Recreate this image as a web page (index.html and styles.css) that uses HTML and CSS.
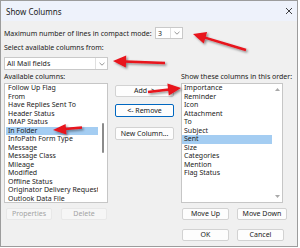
FILE: index.html
```html
<!DOCTYPE html>
<html lang="en">
<head>
    <meta charset="UTF-8">
    <meta name="viewport" content="width=device-width, initial-scale=1.0">
    <title>Show Columns</title>
    <link rel="stylesheet" href="styles.css">
</head>
<body>
    <div class="window">
        <div class="titlebar">
            <span class="title">Show Columns</span>
            <svg class="close" width="8" height="8" viewBox="0 0 8 8">
                <path d="M1 1 L7 7 M7 1 L1 7" stroke="#2b2b2b" stroke-width="0.9" fill="none"/>
            </svg>
        </div>
        <div class="content">
            <div class="max-row">
                <span class="max-label">Maximum number of lines in compact mode:</span>
                <div class="select select-small">
                    <span class="select-text">3</span>
                    <span class="select-drop">
                        <svg width="6" height="4" viewBox="0 0 6 4"><path d="M0.5 0.8 L3 3.2 L5.5 0.8" stroke="#6a6a6a" stroke-width="0.7" fill="none"/></svg>
                    </span>
                </div>
            </div>
            <div class="caption top-caption">Select available columns from:</div>
            <div class="select select-wide">
                <span class="select-text">All Mail fields</span>
                <span class="select-drop">
                    <svg width="6" height="4" viewBox="0 0 6 4"><path d="M0.5 0.8 L3 3.2 L5.5 0.8" stroke="#6a6a6a" stroke-width="0.7" fill="none"/></svg>
                </span>
            </div>
            <div class="columns">
                <div class="col-left">
                    <div class="caption">Available columns:</div>
                    <div class="listbox list-left">
                        <div class="items">
                            <div class="item">Follow Up Flag</div>
                            <div class="item">From</div>
                            <div class="item">Have Replies Sent To</div>
                            <div class="item">Header Status</div>
                            <div class="item">IMAP Status</div>
                            <div class="item selected">In Folder</div>
                            <div class="item">InfoPath Form Type</div>
                            <div class="item">Message</div>
                            <div class="item">Message Class</div>
                            <div class="item">Mileage</div>
                            <div class="item">Modified</div>
                            <div class="item">Offline Status</div>
                            <div class="item">Originator Delivery Requested</div>
                            <div class="item">Outlook Data File</div>
                        </div>
                        <div class="scroll"><div class="thumb"></div></div>
                    </div>
                    <div class="btn-row left-buttons">
                        <button class="btn" disabled>Properties</button>
                        <button class="btn" disabled>Delete</button>
                    </div>
                </div>
                <div class="col-mid">
                    <button class="btn btn-add">Add -&gt;</button>
                    <button class="btn btn-remove">&lt;- Remove</button>
                    <button class="btn btn-new">New Column...</button>
                </div>
                <div class="col-right">
                    <div class="caption">Show these columns in this order:</div>
                    <div class="listbox list-right">
                        <div class="items">
                            <div class="item">Importance</div>
                            <div class="item">Reminder</div>
                            <div class="item">Icon</div>
                            <div class="item">Attachment</div>
                            <div class="item">To</div>
                            <div class="item">Subject</div>
                            <div class="item selected">Sent</div>
                            <div class="item">Size</div>
                            <div class="item">Categories</div>
                            <div class="item">Mention</div>
                            <div class="item">Flag Status</div>
                        </div>
                        <div class="scroll arrows-only">
                            <svg width="5" height="3" viewBox="0 0 5 3"><path d="M0 3 L2.5 0 L5 3 Z" fill="#a9a9a9"/></svg>
                            <svg width="5" height="3" viewBox="0 0 5 3"><path d="M0 0 L2.5 3 L5 0 Z" fill="#a9a9a9"/></svg>
                        </div>
                    </div>
                    <div class="btn-row right-buttons">
                        <button class="btn btn-up">Move Up</button>
                        <button class="btn btn-down">Move Down</button>
                    </div>
                    <div class="btn-row ok-buttons">
                        <button class="btn btn-ok">OK</button>
                        <button class="btn btn-cancel">Cancel</button>
                    </div>
                </div>
            </div>
        </div>
    </div>

    <!-- red callout arrows drawn over the dialog -->
    <svg class="callouts" width="300" height="248" viewBox="0 0 300 248">
        <defs>
            <filter id="shadow" x="-20%" y="-50%" width="140%" height="200%">
                <feDropShadow dx="1.5" dy="1.5" stdDeviation="0.9" flood-color="#000" flood-opacity="0.45"/>
            </filter>
        </defs>
        <g fill="#e8121c" stroke="#e8121c" filter="url(#shadow)">
            <line x1="246" y1="50" x2="205" y2="37.7" stroke-width="2.4"/>
            <polygon points="193,34 207.1,32 203.7,43.5" stroke="none"/>

            <line x1="165" y1="63" x2="125" y2="61.5" stroke-width="2.4"/>
            <polygon points="113,61 126.2,55.5 125.8,67.5" stroke="none"/>

            <line x1="82" y1="127.5" x2="65" y2="129" stroke-width="2.4"/>
            <polygon points="53,130 65.6,123.9 66.4,134.4" stroke="none"/>

            <line x1="148" y1="92" x2="169" y2="89.5" stroke-width="2.4"/>
            <polygon points="181,88 168.8,95.6 167.4,83.6" stroke="none"/>
        </g>
    </svg>
</body>
</html>
```

FILE: styles.css
```css
body {
    margin: 0;
    width: 300px;
    height: 248px;
    position: relative;
    font-family: "Noto Sans", "Open Sans", sans-serif;
    font-size: 7px;
    color: #1b1b1b;
    background-color: #ffffff;
}

.window {
    width: 296px;
    height: 245px;
    border: 1px solid #9c9c9c;
    background-color: #f0f0f0;
    display: flex;
    flex-direction: column;
}

.titlebar {
    height: 20px;
    background-color: #eef2fb;
    display: flex;
    align-items: center;
    justify-content: space-between;
    padding: 0 4px 0 5px;
}

.title {
    font-size: 8px;
}

.content {
    padding: 0 3px;
}

.max-row {
    margin-top: 6px;
    height: 12px;
    display: flex;
    align-items: center;
}

.max-label {
    width: 151px;
    white-space: nowrap;
}

.select {
    height: 12px;
    border: 1px solid #c9c9c9;
    background-color: #fff;
    display: flex;
    box-sizing: border-box;
}

.select-small {
    width: 28px;
}

.select-wide {
    width: 104px;
    height: 13px;
    margin-top: 4px;
}

.select-text {
    flex: 1;
    padding-left: 2px;
    display: flex;
    align-items: center;
}

.select-drop {
    width: 11px;
    border-left: 1px solid #e0e0e0;
    display: flex;
    align-items: center;
    justify-content: center;
}

.caption {
    line-height: 10px;
    white-space: nowrap;
}

.top-caption {
    margin-top: 4px;
}

.columns {
    display: flex;
    gap: 7px;
    margin-top: 2px;
}

.col-left {
    width: 104px;
}

.col-mid {
    width: 59px;
    padding-top: 13px;
    display: flex;
    flex-direction: column;
}

.col-right {
    width: 106px;
}

.listbox {
    margin-top: 1px;
    height: 120px;
    border: 1px solid #c6c6c6;
    background-color: #fff;
    box-sizing: border-box;
    display: flex;
    overflow: hidden;
}

.list-left .items {
    padding-left: 1px;
    width: 92px;
}

.list-right {
    width: 102px;
}

.list-right .items {
    width: 90px;
}

.item {
    height: 8.5px;
    line-height: 8.5px;
    padding-left: 2px;
    white-space: nowrap;
    overflow: hidden;
}

.item.selected {
    background-color: #a4cdf2;
}

.scroll {
    flex: 1;
    position: relative;
}

.thumb {
    position: absolute;
    left: 4px;
    top: 39px;
    width: 2px;
    height: 30px;
    border-radius: 1px;
    background-color: #8b8b8b;
}

.arrows-only {
    display: flex;
    flex-direction: column;
    align-items: center;
    justify-content: space-between;
    padding: 4px 0 4px 0;
}

.btn {
    height: 12px;
    padding: 0;
    border: 1px solid #d2d2d2;
    border-radius: 2px;
    background-color: #fdfdfd;
    font: inherit;
    color: #1b1b1b;
    box-sizing: border-box;
    line-height: 10px;
    white-space: nowrap;
}

.btn:disabled {
    background-color: #f6f6f6;
    border-color: #e8e8e8;
    color: #a3a3a3;
}

.btn-row {
    display: flex;
    margin-top: 5px;
}

.left-buttons {
    padding-left: 2px;
    gap: 9px;
}

.left-buttons .btn {
    width: 46px;
}

.right-buttons,
.ok-buttons {
    padding-left: 1px;
    gap: 8px;
}

.ok-buttons {
    margin-top: 9px;
}

.btn-up,
.btn-ok,
.btn-cancel {
    width: 47px;
}

.btn-down {
    width: 50px;
}

.btn-remove {
    margin-top: 7px;
    height: 13px;
    border-color: #0067c0;
}

.btn-new {
    margin-top: 10px;
    height: 13px;
}

.callouts {
    position: absolute;
    left: 0;
    top: 0;
    pointer-events: none;
}
```
